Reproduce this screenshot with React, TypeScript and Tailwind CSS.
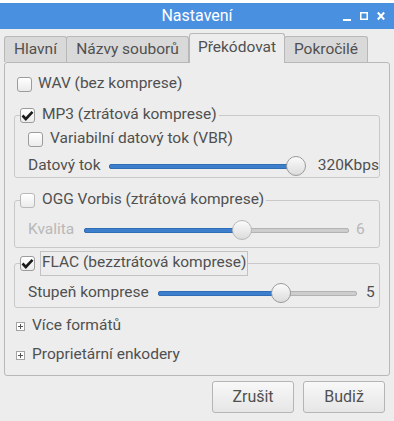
import type { ReactNode } from "react";

const font = { fontFamily: "Roboto, 'Liberation Sans', sans-serif" };

function CheckBox({ checked, disabled }: { checked?: boolean; disabled?: boolean }) {
  return (
    <span
      className={`relative flex h-[15px] w-[15px] shrink-0 items-center justify-center rounded-[3px] border bg-gradient-to-b from-white to-[#ebebeb] ${
        disabled ? "border-[#b9b9b9]" : "border-[#9c9c9c]"
      }`}
    >
      {checked && (
        <svg width="13" height="11" viewBox="0 0 13 11">
          <path d="M1.5 5.5 L4.8 9 L11.5 1.8" fill="none" stroke="#1a1a1a" strokeWidth="2.6" />
        </svg>
      )}
    </span>
  );
}

function Slider({ value, track, disabled }: { value: number; track: number; disabled?: boolean }) {
  const pos = value * (track - 20);
  return (
    <div className="relative h-[20px] shrink-0" style={{ width: track }}>
      <div className="absolute left-0 right-[1px] top-[8px] h-[5px] rounded-[2px] border border-[#b3b3b3] bg-[#cdcdcd]" />
      <div
        className="absolute left-0 top-[8px] h-[5px] rounded-[2px] border border-[#2f6db5] bg-[#3d7fcc]"
        style={{ width: pos + 10 }}
      />
      <div
        className={`absolute top-0 h-[20px] w-[20px] rounded-full border bg-gradient-to-b from-[#fbfbfb] to-[#dcdcdc] ${
          disabled ? "border-[#b8b8b8]" : "border-[#9a9a9a]"
        }`}
        style={{ left: pos }}
      />
    </div>
  );
}

function Frame({ legend, children }: { legend: ReactNode; children: ReactNode }) {
  return (
    <fieldset className="mx-[9px] min-w-0 rounded-[3px] border border-[#c9c9c9] pb-[1px]">
      <legend className="ml-[5px] flex h-[20px] items-center">{legend}</legend>
      {children}
    </fieldset>
  );
}

function Expander({ label }: { label: string }) {
  return (
    <div className="flex h-[20px] items-center pl-[11px]">
      <span className="flex h-[9px] w-[9px] items-center justify-center border border-[#a3a3a3] bg-white">
        <svg width="7" height="7" viewBox="0 0 7 7">
          <path d="M1 3.5 H6 M3.5 1 V6" stroke="#555" strokeWidth="1" />
        </svg>
      </span>
      <span className="ml-[7px]">{label}</span>
    </div>
  );
}

const tabs = [
  { label: "Hlavní", w: 62 },
  { label: "Názvy souborů", w: 122 },
  { label: "Překódovat", w: 96, active: true },
  { label: "Pokročilé", w: 83 },
];

export default function App() {
  return (
    <div className="h-[421px] w-[394px] overflow-hidden bg-[#ededed] text-[15.5px] text-[#505050]" style={font}>
      <div className="h-[3px] bg-white" />
      <div className="relative flex h-[26px] items-center justify-center bg-[#4a90e0] text-white">
        <span className="text-[16px]">Nastavení</span>
        <div className="absolute right-[9px] top-0 flex h-full items-center gap-[9px]">
          <svg width="8" height="10" viewBox="0 0 8 10">
            <path d="M0 9 H8" stroke="white" strokeWidth="2" />
          </svg>
          <svg width="8" height="10" viewBox="0 0 8 10">
            <rect x="0.75" y="1.75" width="6.5" height="6.5" fill="none" stroke="white" strokeWidth="1.5" />
          </svg>
          <svg width="8" height="10" viewBox="0 0 8 10">
            <path d="M0.8 1.5 L7.2 8.5 M7.2 1.5 L0.8 8.5" stroke="white" strokeWidth="2" />
          </svg>
        </div>
      </div>

      <div className="flex h-[33px] items-end pl-[4px] pt-[4px]">
        {tabs.map((t) =>
          t.active ? (
            <div
              key={t.label}
              className="relative z-10 -mb-px flex h-[30px] items-center justify-center rounded-t-[3px] border border-b-0 border-[#b8b8b8] bg-[#ededed] pb-[2px]"
              style={{ width: t.w }}
            >
              {t.label}
            </div>
          ) : (
            <div
              key={t.label}
              className="-ml-px flex h-[26px] items-center justify-center rounded-t-[3px] border border-b-0 border-[#b8b8b8] bg-[#d9d9d9] first:ml-0"
              style={{ width: t.w + 1 }}
            >
              {t.label}
            </div>
          )
        )}
      </div>

      <div className="relative ml-[4px] h-[314px] w-[386px] rounded-[3px] border border-[#b8b8b8] pt-[11px]">
        <div className="flex h-[20px] items-center pl-[12px]">
          <CheckBox />
          <span className="ml-[6px]">WAV (bez komprese)</span>
        </div>

        <div className="mt-[11px]">
          <Frame
            legend={
              <>
                <CheckBox checked />
                <span className="ml-[7px] pr-[2px]">MP3 (ztrátová komprese)</span>
              </>
            }
          >
            <div className="mt-[4px] flex h-[20px] items-center pl-[13px]">
              <CheckBox />
              <span className="ml-[7px]">Variabilní datový tok (VBR)</span>
            </div>
            <div className="mt-[7px] flex h-[20px] items-center whitespace-nowrap pl-[13px]">
              <span className="w-[82px]">Datový tok</span>
              <Slider value={1} track={197} />
              <span className="ml-[12px]">320Kbps</span>
            </div>
          </Frame>
        </div>

        <div className="mt-[12px]">
          <Frame
            legend={
              <>
                <CheckBox disabled />
                <span className="ml-[7px] pr-[2px]">OGG Vorbis (ztrátová komprese)</span>
              </>
            }
          >
            <div className="mt-[10px] flex h-[20px] items-center pl-[13px] text-[#b8b8b8]">
              <span className="w-[56px]">Kvalita</span>
              <Slider value={0.6} track={266} disabled />
              <span className="ml-[6px]">6</span>
            </div>
            <div className="h-[6px]" />
          </Frame>
        </div>

        <div className="mt-[5px]">
          <Frame
            legend={
              <>
                <CheckBox checked />
                <span className="ml-[5px] flex h-[25px] items-center border border-[#c2c2c2] px-[1px]">
                  FLAC (bezztrátová komprese)
                </span>
              </>
            }
          >
            <div className="mt-[10px] flex h-[20px] items-center pl-[13px]">
              <span className="w-[130px]">Stupeň komprese</span>
              <Slider value={0.625} track={200} />
              <span className="ml-[8px]">5</span>
            </div>
            <div className="h-[3px]" />
          </Frame>
        </div>

        <div className="mt-[8px]">
          <Expander label="Více formátů" />
        </div>
        <div className="mt-[9px]">
          <Expander label="Proprietární enkodery" />
        </div>
      </div>

      <div className="mt-[5px] flex justify-end gap-[9px] pr-[9px]">
        {["Zrušit", "Budiž"].map((b) => (
          <button
            key={b}
            className="flex h-[32px] w-[82px] items-center justify-center rounded-[3px] border border-[#b5b5b5] bg-gradient-to-b from-[#f8f8f8] to-[#e6e6e6] text-[16px] text-[#505050]"
          >
            {b}
          </button>
        ))}
      </div>
    </div>
  );
}
